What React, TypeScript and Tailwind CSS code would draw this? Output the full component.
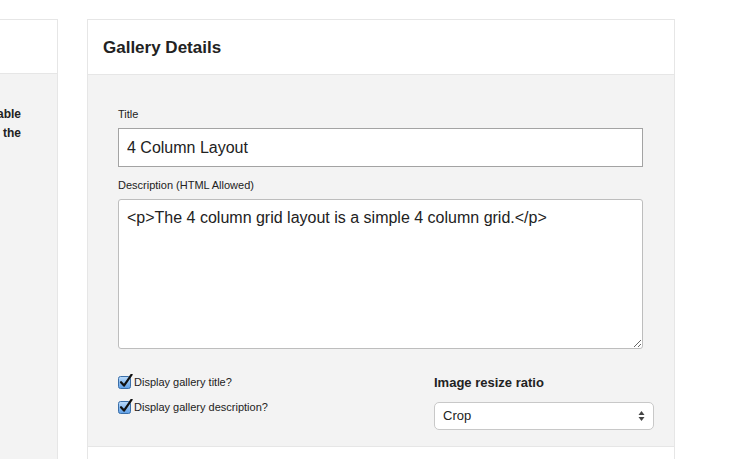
import React from 'react';

function CheckIcon() {
  return (
    <svg width="15" height="15" viewBox="0 0 15 15" className="shrink-0">
      <defs>
        <linearGradient id="cbg" x1="0" y1="0" x2="0" y2="1">
          <stop offset="0" stopColor="#bcdcfb" />
          <stop offset="1" stopColor="#5d9ee6" />
        </linearGradient>
      </defs>
      <rect x="0.5" y="2.5" width="12" height="12" rx="2" fill="url(#cbg)" stroke="#3a6ea8" />
      <path d="M3 8.2 L6 11.6 L13.6 0.6" fill="none" stroke="#111" strokeWidth="2.2" strokeLinecap="round" strokeLinejoin="round" />
    </svg>
  );
}

function CheckRow({ label }: { label: string }) {
  return (
    <label className="flex items-center gap-[1px] text-[11px] leading-[14px] text-[#222]">
      <CheckIcon />
      <span>{label}</span>
    </label>
  );
}

export default function App() {
  return (
    <div className="min-h-screen bg-white font-['Liberation_Sans',Arial,sans-serif] text-[#222] pt-[19px] flex gap-[29px] overflow-hidden">
      {/* left card, mostly off screen */}
      <div className="w-[58px] shrink-0 h-[460px] border-t border-r border-[#e6e6e6] flex flex-col">
        <div className="h-[54px] bg-white border-b border-[#e6e6e6]" />
        <div className="flex-1 bg-[#f3f3f3] relative overflow-hidden">
          <div className="absolute right-[36px] top-[31px] text-right whitespace-nowrap text-[12px] leading-[19px] font-bold">
            <div>Make this gallery searchable</div>
            <div>to everyone on the</div>
          </div>
        </div>
      </div>

      {/* gallery details card */}
      <div className="w-[588px] shrink-0 h-[460px] border-t border-l border-r border-[#e6e6e6] flex flex-col">
        <div className="h-[55px] bg-white border-b border-[#e6e6e6] px-[15px] flex items-center">
          <h2 className="text-[17px] font-bold text-[#222] pt-[2px]">Gallery Details</h2>
        </div>
        <div className="bg-[#f3f3f3] border-b border-[#e6e6e6] pl-[30px] pr-[20px] pt-[33px] pb-[16px]">
          <div className="text-[11px] leading-[13px] mb-[7px]">Title</div>
          <input
            readOnly
            value="4 Column Layout"
            className="block w-[525px] h-[39px] bg-white border border-[#a3a3a3] px-[8px] text-[16px] text-[#222] outline-none"
          />
          <div className="text-[11px] leading-[13px] mt-[12px] mb-[7px]">Description (HTML Allowed)</div>
          <textarea
            readOnly
            defaultValue="<p>The 4 column grid layout is a simple 4 column grid.</p>"
            className="block w-[525px] h-[150px] bg-white border border-[#bdbdbd] rounded-[3px] px-[8px] py-[8px] text-[16px] leading-[19px] text-[#222] outline-none"
          />
          <div className="flex mt-[24px]">
            <div className="w-[316px] flex flex-col gap-[10px] pt-[1px]">
              <CheckRow label="Display gallery title?" />
              <CheckRow label="Display gallery description?" />
            </div>
            <div className="flex flex-col">
              <div className="text-[13px] leading-[16px] font-bold mt-[2px]">Image resize ratio</div>
              <div className="mt-[11px] w-[220px] h-[28px] bg-white border border-[#c8c8c8] rounded-[5px] flex items-center justify-between pl-[8px] pr-[8px]">
                <span className="text-[13px] text-[#222]">Crop</span>
                <svg width="7" height="12" viewBox="0 0 7 12">
                  <path d="M3.5 1 L6.5 5 L0.5 5 Z" fill="#444" />
                  <path d="M3.5 11 L6.5 7 L0.5 7 Z" fill="#444" />
                </svg>
              </div>
            </div>
          </div>
        </div>
        <div className="flex-1 bg-white" />
      </div>
    </div>
  );
}
